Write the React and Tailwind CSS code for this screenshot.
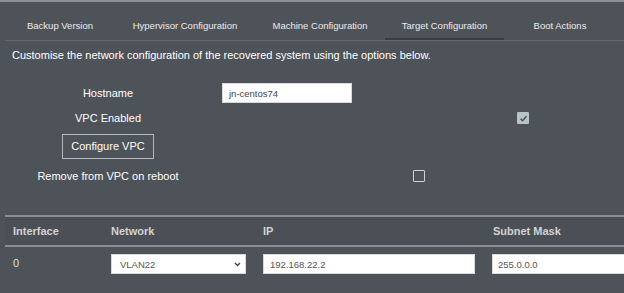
const tabs = [
  { label: "Backup Version", w: "w-[110px]" },
  { label: "Hypervisor Configuration", w: "w-[140px]" },
  { label: "Machine Configuration", w: "w-[130px]" },
  { label: "Target Configuration", w: "w-[119px]", active: true },
  { label: "Boot Actions", w: "w-[112px]" },
];

const Checked = () => (
  <span className="flex items-center justify-center w-[12px] h-[12px] bg-[#b8c2c9] rounded-[1px]">
    <svg width="9" height="9" viewBox="0 0 9 9" fill="none">
      <path d="M1.5 4.8l2 2 4-4.6" stroke="#4a4f56" strokeWidth="1.4" />
    </svg>
  </span>
);

const Unchecked = () => (
  <span className="block w-[12px] h-[12px] border-[1.5px] border-[#cfd1d3] rounded-[1px]" />
);

const App = () => {
  return (
    <div className="w-[624px] h-[293px] overflow-hidden bg-[#4e5259] border-t-2 border-[#8e9196] font-['Liberation_Sans',Arial,sans-serif]">
      {/* Tabs */}
      <div className="flex ml-[5px] border-b border-[#63676d]">
        {tabs.map((t) => (
          <div
            key={t.label}
            className={`${t.w} shrink-0 text-center text-[9.5px] leading-[12px] pt-[18px] pb-[6px] border-b-2 text-[#ececec] ${t.active ? "border-[#393c41]" : "border-transparent"}`}
          >
            {t.label}
          </div>
        ))}
      </div>

      <p className="px-3 pt-[8px] text-[11px] leading-[13px] text-white">
        Customise the network configuration of the recovered system using the options below.
      </p>

      {/* Form */}
      <div className="mt-[21px] text-[11px] leading-[13px] text-white">
        <div className="flex items-center h-[20px]">
          <span className="w-[222px] pr-[6px] text-center shrink-0">Hostname</span>
          <input
            readOnly
            defaultValue="jn-centos74"
            className="w-[130px] h-[20px] bg-white border border-[#d9d9d9] pl-[6px] text-[9.5px] text-[#444] outline-none"
          />
        </div>
        <div className="flex items-center h-[20px] mt-[5px]">
          <span className="w-[222px] pr-[6px] text-center shrink-0">VPC Enabled</span>
          <span className="ml-[295px]">
            <Checked />
          </span>
        </div>
        <div className="flex items-center h-[25px] mt-[6px]">
          <div className="w-[222px] pr-[6px] flex justify-center shrink-0">
            <button className="w-[92px] h-[25px] border border-[#b5b7ba] text-white text-[11px]">
              Configure VPC
            </button>
          </div>
        </div>
        <div className="flex items-center h-[20px] mt-[7px]">
          <span className="w-[222px] pr-[6px] text-center shrink-0">Remove from VPC on reboot</span>
          <span className="ml-[191px]">
            <Unchecked />
          </span>
        </div>
      </div>

      {/* Interfaces table */}
      <div className="mt-[29px] ml-[5px] w-[760px] border-t-2 border-[#8a8d92]">
        <div className="flex h-[30px] items-center bg-[#4b4f56] text-[11px] font-bold text-[#d3d3d3] border-b-2 border-[#8a8d92]">
          <div className="w-[98px] pl-2">Interface</div>
          <div className="w-[152px] pl-2">Network</div>
          <div className="w-[230px] pl-2">IP</div>
          <div className="flex-1 pl-2">Subnet Mask</div>
        </div>
        <div className="flex items-start pt-[7px] text-[11px] leading-[13px] text-[#dcdcdc]">
          <div className="w-[98px] pl-2 pt-[3px]">0</div>
          <div className="w-[152px] pl-2">
            <div className="relative w-[135px] h-[20px]">
              <select
                defaultValue="VLAN22"
                className="appearance-none w-full h-full bg-white border border-[#d9d9d9] pl-[8px] text-[9.5px] text-[#555] outline-none"
              >
                <option>VLAN22</option>
              </select>
              <svg className="absolute right-[5px] top-[8px]" width="7" height="5" viewBox="0 0 7 5" fill="none">
                <path d="M1 1l2.5 2.5L6 1" stroke="#444" strokeWidth="1.4" />
              </svg>
            </div>
          </div>
          <div className="w-[230px] pl-2">
            <input
              readOnly
              defaultValue="192.168.22.2"
              className="w-[212px] h-[20px] bg-white border border-[#d9d9d9] pl-[6px] text-[9.5px] text-[#555] outline-none"
            />
          </div>
          <div className="flex-1 pl-[7px]">
            <input
              readOnly
              defaultValue="255.0.0.0"
              className="w-[212px] h-[20px] bg-white border border-[#d9d9d9] pl-[5px] text-[9.5px] text-[#555] outline-none"
            />
          </div>
        </div>
      </div>
    </div>
  );
};

export default App;
